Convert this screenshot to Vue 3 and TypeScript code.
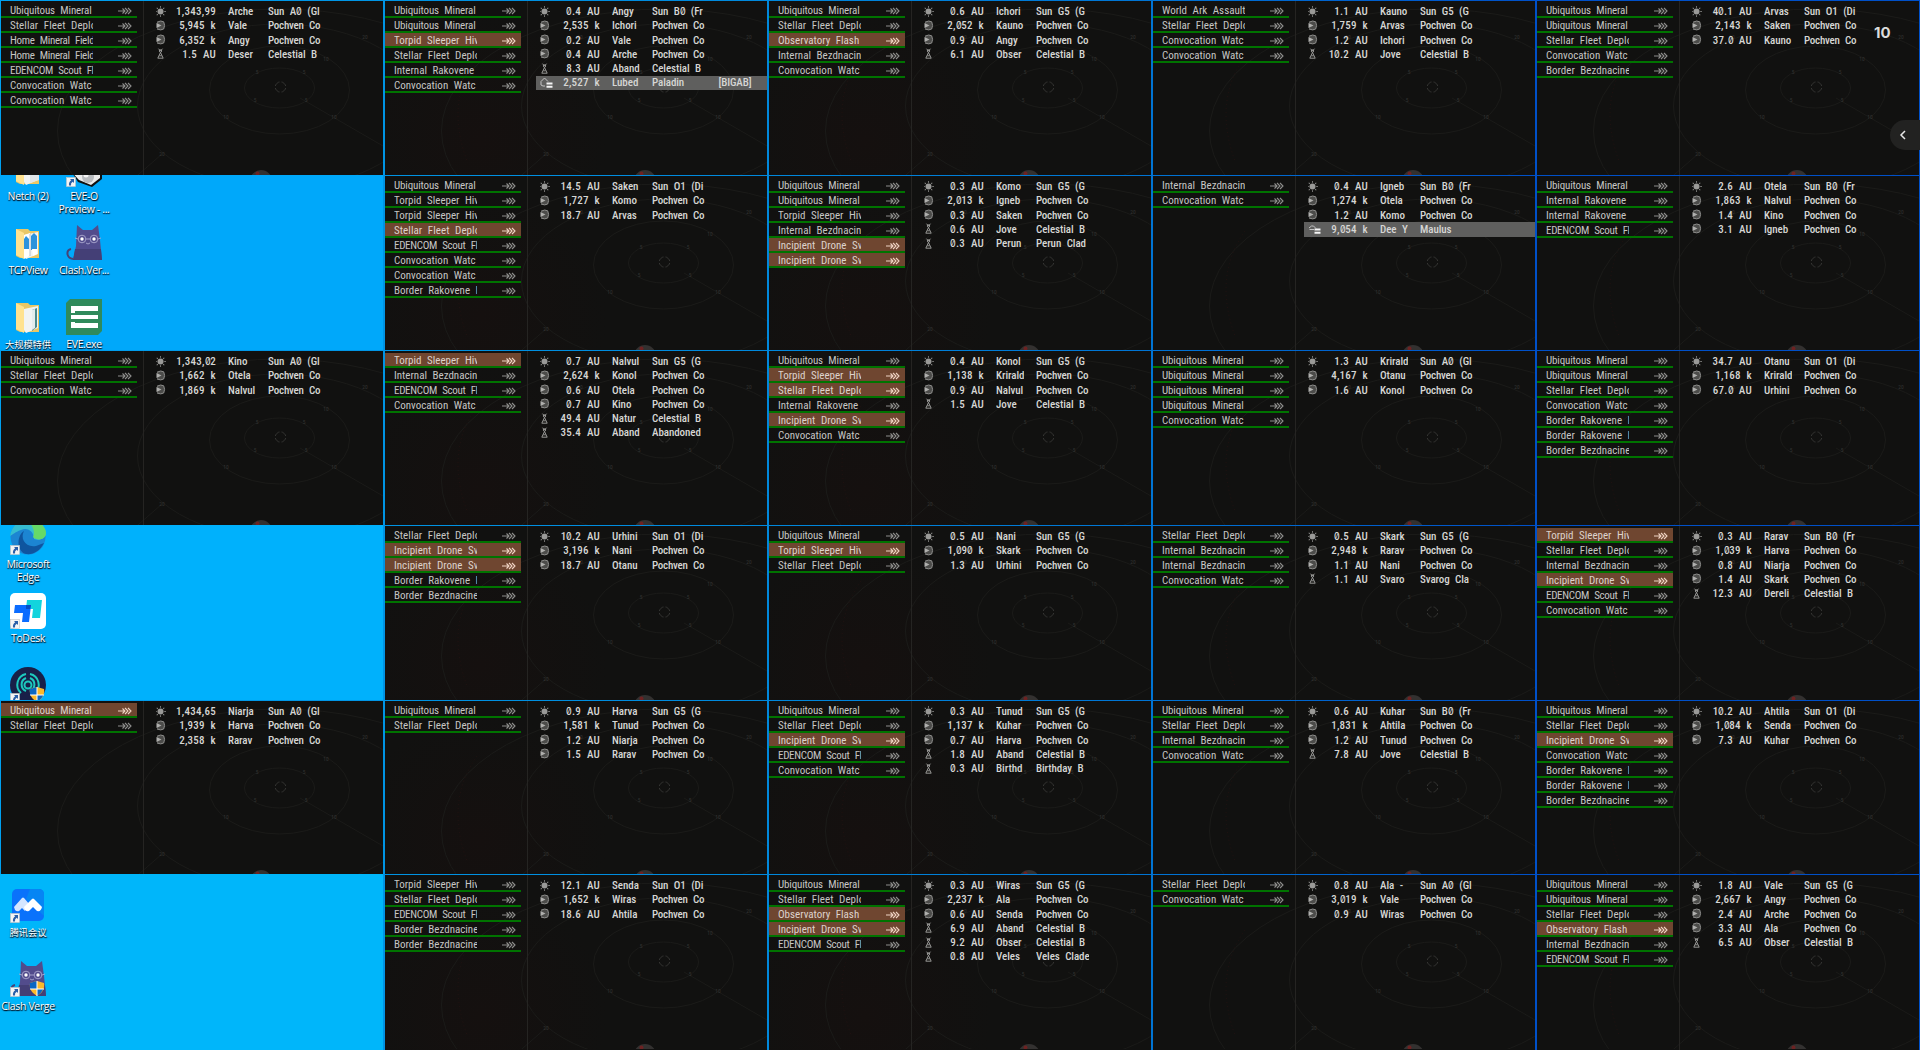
<script setup lang="ts">
interface Site { label: string; track: string; active: boolean }
interface Item { kind: string; dist: string; name: string; type: string; tag: string }
interface Shortcut { icon: string; label: string[]; link?: boolean; shield?: boolean }
interface Client { sites: Site[]; items: Item[]; desktop?: Shortcut[][]; offset: string }

const names: Record<string, string> = {
  U: 'Ubiquitous Mineral', S: 'Stellar Fleet Deplo', H: 'Home Mineral Field', E: 'EDENCOM Scout Fl',
  C: 'Convocation Watc', T: 'Torpid Sleeper Hiv', R: 'Internal Rakovene', Z: 'Internal Bezdnacin',
  O: 'Observatory Flash', W: 'World Ark Assault', D: 'Incipient Drone Sv', K: 'Border Rakovene I',
  B: 'Border Bezdnacine',
}
const types: Record<string, string> = { p: 'Pochven Co', c: 'Celestial B' }
const tracks: Record<string, string> = { U: 'snug', S: 'loose', H: 'tight', E: 'tight' }

// Lowercase site codes are the highlighted signatures.
function client(sites: string, items: string): Client {
  return {
    sites: [...sites].map((k) => {
      const key = k.toUpperCase()
      return { label: names[key], track: tracks[key] ?? '', active: k !== key }
    }),
    items: items.split(';').map((row) => {
      const [kind, dist, name, type, tag = ''] = row.split('|')
      return { kind, dist, name, type: types[type] ?? type, tag }
    }),
    offset: '',
  }
}
function desktop(offset: string, cols: Shortcut[][]): Client {
  return { sites: [], items: [], desktop: cols, offset }
}

const clients: Client[] = [
  client('USHHECC', 's|1,343,99|Arche|Sun A0 (Gl;g|5,945 k|Vale|p;g|6,352 k|Angy|p;b|1.5 AU|Deser|c'),
  client('UUtSRC', 's|0.4 AU|Angy|Sun B0 (Fr;g|2,535 k|Ichori|p;g|0.2 AU|Vale|p;g|0.4 AU|Arche|p;b|8.3 AU|Aband|c;f|2,527 k|Lubed|Paladin|[BIGAB]'),
  client('USoZC', 's|0.6 AU|Ichori|Sun G5 (G;g|2,052 k|Kauno|p;g|0.9 AU|Angy|p;b|6.1 AU|Obser|c'),
  client('WSCC', 's|1.1 AU|Kauno|Sun G5 (G;g|1,759 k|Arvas|p;g|1.2 AU|Ichori|p;b|10.2 AU|Jove|c'),
  client('UUSCB', 's|40.1 AU|Arvas|Sun O1 (Di;g|2,143 k|Saken|p;g|37.0 AU|Kauno|p'),

  desktop('up', [
    [{ icon: 'folder', label: ['Netch (2)'] }, { icon: 'folderBlue', label: ['TCPView'] }, { icon: 'folderDoc', label: ['大规模特供'] }],
    [{ icon: 'eveo', label: ['EVE-O', 'Preview - ...'], link: true }, { icon: 'cat', label: ['Clash.Ver...'] }, { icon: 'exe', label: ['EVE.exe'] }],
  ]),
  client('UTTsECCK', 's|14.5 AU|Saken|Sun O1 (Di;g|1,727 k|Komo|p;g|18.7 AU|Arvas|p'),
  client('UUTZdd', 's|0.3 AU|Komo|Sun G5 (G;g|2,013 k|Igneb|p;g|0.3 AU|Saken|p;b|0.6 AU|Jove|c;b|0.3 AU|Perun|Perun Clad'),
  client('ZC', 's|0.4 AU|Igneb|Sun B0 (Fr;g|1,274 k|Otela|p;g|1.2 AU|Komo|p;h|9,054 k|Dee Y|Maulus'),
  client('URRE', 's|2.6 AU|Otela|Sun B0 (Fr;g|1,863 k|Nalvul|p;g|1.4 AU|Kino|p;g|3.1 AU|Igneb|p'),

  client('USC', 's|1,343,02|Kino|Sun A0 (Gl;g|1,662 k|Otela|p;g|1,869 k|Nalvul|p'),
  client('tZEC', 's|0.7 AU|Nalvul|Sun G5 (G;g|2,624 k|Konol|p;g|0.6 AU|Otela|p;g|0.7 AU|Kino|p;b|49.4 AU|Natur|c;b|35.4 AU|Aband|Abandoned'),
  client('UtsRdC', 's|0.4 AU|Konol|Sun G5 (G;g|1,138 k|Krirald|p;g|0.9 AU|Nalvul|p;b|1.5 AU|Jove|c'),
  client('UUUUC', 's|1.3 AU|Krirald|Sun A0 (Gl;g|4,167 k|Otanu|p;g|1.6 AU|Konol|p'),
  client('UUSCKKB', 's|34.7 AU|Otanu|Sun O1 (Di;g|1,168 k|Krirald|p;g|67.0 AU|Urhini|p'),

  desktop('mid', [
    [{ icon: 'edge', label: ['Microsoft', 'Edge'], link: true }, { icon: 'todesk', label: ['ToDesk'], link: true }, { icon: 'ring', label: [], link: true, shield: true }],
  ]),
  client('SddKB', 's|10.2 AU|Urhini|Sun O1 (Di;g|3,196 k|Nani|p;g|18.7 AU|Otanu|p'),
  client('UtS', 's|0.5 AU|Nani|Sun G5 (G;g|1,090 k|Skark|p;g|1.3 AU|Urhini|p'),
  client('SZZC', 's|0.5 AU|Skark|Sun G5 (G;g|2,948 k|Rarav|p;g|1.1 AU|Nani|p;b|1.1 AU|Svaro|Svarog Cla'),
  client('tSZdEC', 's|0.3 AU|Rarav|Sun B0 (Fr;g|1,039 k|Harva|p;g|0.8 AU|Niarja|p;g|1.4 AU|Skark|p;b|12.3 AU|Dereli|c'),

  client('uS', 's|1,434,65|Niarja|Sun A0 (Gl;g|1,939 k|Harva|p;g|2,358 k|Rarav|p'),
  client('US', 's|0.9 AU|Harva|Sun G5 (G;g|1,581 k|Tunud|p;g|1.2 AU|Niarja|p;g|1.5 AU|Rarav|p'),
  client('USdEC', 's|0.3 AU|Tunud|Sun G5 (G;g|1,137 k|Kuhar|p;g|0.7 AU|Harva|p;b|1.8 AU|Aband|c;b|0.3 AU|Birthd|Birthday B'),
  client('USZC', 's|0.6 AU|Kuhar|Sun B0 (Fr;g|1,831 k|Ahtila|p;g|1.2 AU|Tunud|p;b|7.8 AU|Jove|c'),
  client('USdCKKB', 's|10.2 AU|Ahtila|Sun O1 (Di;g|1,084 k|Senda|p;g|7.3 AU|Kuhar|p'),

  desktop('low', [
    [{ icon: 'meeting', label: ['腾讯会议'], link: true }, { icon: 'cat', label: ['Clash Verge'], link: true, shield: true }],
  ]),
  client('TSEBB', 's|12.1 AU|Senda|Sun O1 (Di;g|1,652 k|Wiras|p;g|18.6 AU|Ahtila|p'),
  client('USodE', 's|0.3 AU|Wiras|Sun G5 (G;g|2,237 k|Ala|p;g|0.6 AU|Senda|p;b|6.9 AU|Aband|c;b|9.2 AU|Obser|c;b|0.8 AU|Veles|Veles Clade'),
  client('SC', 's|0.8 AU|Ala -|Sun A0 (Gl;g|3,019 k|Vale|p;g|0.9 AU|Wiras|p'),
  client('UUSoZE', 's|1.8 AU|Vale|Sun G5 (G;g|2,667 k|Angy|p;g|2.4 AU|Arche|p;g|3.3 AU|Ala|p;b|6.5 AU|Obser|c'),
]

const marks: [number, number, string][] = [
  [256, 73, '5'], [303, 73, '5'], [254, 101, '5'], [305, 101, '5'], [225, 118, '10'], [333, 118, '10'],
  [325, 60, '10'], [161, 155, '20'], [364, 38, '20'], [195, 38, '10'],
]

// Keeps zeros apart so they can take the slashed form.
const parts = (t: string): string[] => t.split(/(0)/).filter((p) => p !== '')
const isCjk = (t: string): boolean => /[\u4e00-\u9fff]/.test(t)
const rays = [0, 45, 90, 135, 180, 225, 270, 315]
</script>

<template>
  <main class="wall">
    <section v-for="(c, i) in clients" :key="i" class="cell" :class="{ desk: c.desktop, warm: i % 5 === 1 || i % 5 === 2 }">
      <div v-if="c.desktop" class="desktop" :class="c.offset">
        <div v-for="(col, j) in c.desktop" :key="j" class="col">
          <div v-for="(s, k) in col" :key="k" class="tile">
            <svg class="pic" viewBox="0 0 36 36">
              <template v-if="s.icon.startsWith('folder')">
                <path d="M6 4h12l2 2h9v27H10L6 31z" fill="#e9c766" />
                <path d="M6 4l8 4v26l-8-4z" fill="#ffe28f" />
                <path d="M14 10l14-3v22l-12 5-2-3z" fill="#f1f3f3" />
                <path v-if="s.icon === 'folder'" d="M20 18l9-3v14l-9 3z" fill="#dfe5e8" />
                <g v-if="s.icon === 'folderBlue'">
                  <path d="M14 10l6-2v22l-6 4z" fill="#fff" /><path d="M14 14l2-3 3 3v10h-5z" fill="#2c93dc" />
                  <path d="M21 11l3-3 3 3v14h-6z" fill="#2c93dc" /><path d="M15 24l5 0 0 6-4 3zM22 24l5 0v5l-4 2z" fill="#fff" /><path d="M20 9v22" stroke="#b8c4ce" />
                </g>
                <g v-if="s.icon === 'folderDoc'"><path d="M22 11l5-2v19l-5 4z" fill="#4c8a8d" /><path d="M22 11l3-1v19l-3 2z" fill="#e4ecec" /></g>
              </template>
              <g v-else-if="s.icon === 'cat'">
                <path d="M7 34C0 33 0 25 5 24" fill="none" stroke="#454277" stroke-width="2" />
                <path d="M11 0l6 5h9l6-5 2 15 2 20H7l3-14z" fill="#524c8c" />
                <path d="M9 24h26l1 11H7z" fill="#443f76" />
                <g fill="none" stroke="#aaa7cf" stroke-width=".9"><circle cx="16" cy="14" r="3.8" /><circle cx="28" cy="14" r="3.8" /><path d="M20 14h4M9 13l3 1M32 14l3-1M20 18l2 1 2-1" /></g>
                <circle cx="16" cy="14" r="1.7" fill="#fff" /><circle cx="28" cy="14" r="1.7" fill="#fff" />
              </g>
              <g v-else-if="s.icon === 'exe'">
                <path d="M4 0h32v32l-4 4H0V4z" fill="#2f8a5b" />
                <path d="M5 7h27v5H9v2H5zM5 16h27v4H5zM5 23h4v1h23v5H5z" fill="#fff" />
              </g>
              <g v-else-if="s.icon === 'eveo'">
                <path d="M0 14h36v14l-10 8-14-5-3-5z" fill="#111" /><path d="M1 16h33v11l-9 7-12-5z" fill="#ececec" />
                <circle cx="22" cy="26" r="6" fill="#b9bcbf" /><circle cx="20" cy="24" r="2.5" fill="#f6f6f6" />
              </g>
              <g v-else-if="s.icon === 'edge'">
                <circle cx="18" cy="18" r="17.5" fill="#1c85d2" />
                <path d="M0 17C2 6 10 0 18 0c11 0 18 8 18 14 0 6-7 8-12 6 0-7-6-12-13-9C5 13 2 16 0 17z" fill="#36bcd0" />
                <path d="M18 0c11 0 18 8 18 14 0 6-7 8-12 5-2-1 0-2 0-5 0-5-5-12-6-14z" fill="#66d968" />
                <path d="M14 12c-4 7 1 17 12 15l8-3c-4 8-11 12-18 11C7 33 6 17 14 12z" fill="#0f559f" />
              </g>
              <g v-else-if="s.icon === 'todesk'">
                <rect width="36" height="36" rx="5" fill="#fff" />
                <path d="M17 7h15l-2 18h-8l1-9h-7z" fill="#12d4dd" />
                <path d="M5 12h16l-2 17h-7l1-9H4z" fill="#0a6cff" /><path d="M16 12h5l-1 4h-4z" fill="#064fc4" />
              </g>
              <g v-else-if="s.icon === 'ring'">
                <circle cx="18" cy="18" r="18" fill="#182048" />
                <g fill="none" stroke="#1dc9bd" stroke-width="2"><path d="M16 7a11 11 0 0 0-5 19M20 7a11 11 0 0 1 5 19" /><path d="M16 11a7 7 0 0 0 0 13M20 11a7 7 0 0 1 0 13" /><circle cx="18" cy="18" r="3.5" /></g>
              </g>
              <g v-else>
                <rect x="2" y="2" width="32" height="32" rx="5" fill="#0a72fb" /><path d="M20 2h9a5 5 0 0 1 5 5v22L16 12z" fill="#0685f4" />
                <path d="M4 20l8-9q1-1 2 0l6 7-5 6-3-3-3 3q-2 1-4-1z" fill="#d5e6ff" />
                <path d="M14 20l8-8q1-1 2 0l8 8q-1 5-5 4l-4-4-4 4q-4 1-5-4z" fill="#fff" />
              </g>
              <g v-if="s.shield">
                <path d="M27 20l7 2c1 6-2 10-7 13-5-3-8-7-7-13z" fill="#fbb92b" />
                <path d="M27 20v8h-7l-.2-6zM27 28h6.500q-2 4-6.500 7z" fill="#0a66c2" /><path d="M27 20v15M20 28h14" stroke="#fff" />
              </g>
              <g v-if="s.link">
                <rect x=".5" y="26.500" width="9" height="9" fill="#f4f4f4" stroke="#c4c4c4" stroke-width=".6" />
                <path d="M4 28h4v4l-1.300-1.300Q4.500 32 5 34.500H3Q2.500 31 5.200 29.300z" fill="#2a5fa8" />
              </g>
            </svg>
            <span v-for="l in s.label" :key="l" class="cap" :class="{ cjk: isCjk(l) }">{{ l }}</span>
          </div>
        </div>
      </div>

      <template v-else>
        <svg class="space" viewBox="0 0 382 174">
          <g fill="none" stroke="#1b1b19">
            <ellipse cx="278.500" cy="87" rx="35" ry="20" /><ellipse cx="278.500" cy="89" rx="70" ry="44" />
            <ellipse cx="278.500" cy="105" rx="142" ry="82" /><ellipse cx="278.500" cy="130" rx="222" ry="122" />
            <path d="M299 97L382 145M161 153L130 180" />
            <path v-if="i % 5" class="dots" d="M92 55Q60 100 82 160" />
          </g>
          <path d="M274.500 85v-1l3-3h1m2 0h1l3 3v1m0 2v1l-3 3h-1m-2 0h-1l-3-3v-1" fill="none" stroke="#343432" />
          <text v-for="(m, k) in marks" :key="k" :x="m[0]" :y="m[1]" class="mark">{{ m[2] }}</text>
          <circle cx="260" cy="180" r="11" fill="#333130" /><circle cx="256.500" cy="172.500" r="2" fill="#6d2222" />
        </svg>
        <div class="sites">
          <div v-for="(s, k) in c.sites" :key="k" class="site" :class="{ active: s.active }">
            <span class="label" :class="s.track">{{ s.label }}</span>
            <svg class="warp" viewBox="0 0 14 8"><path d="M0 4h7M4.500 1.500L7 4 4.500 6.500M7 1l3 3-3 3M10 1l3 3-3 3" /></svg>
          </div>
        </div>
        <div class="items">
          <div v-for="(o, k) in c.items" :key="k" class="item" :class="{ ship: o.kind === 'f' || o.kind === 'h' }">
            <svg class="ico" viewBox="0 0 14 12">
              <g v-if="o.kind === 's'"><circle cx="4.500" cy="5.500" r="3" fill="#9a9a98" /><path v-for="r in rays" :key="r" d="M4.500 .2v1.500" stroke="#8c8c8a" :transform="`rotate(${r} 4.5 5.5)`" /></g>
              <g v-else-if="o.kind === 'g'"><path d="M1 2.200Q5 0 7.700 1.800 9.500 5.500 7.700 9 5 10.800 1 9" fill="#4c4c4a" stroke="#8e8e8c" /><path d="M.5 3l5 2.500-5 2.500z" fill="#b0b0ae" /></g>
              <g v-else-if="o.kind === 'b'" fill="none" stroke="#a5a5a3" stroke-width=".9"><circle cx="4.500" cy="3" r="1.200" /><path d="M2.500 .7L4.500 3 6.500 .7M4.500 4.500L1.800 10.200h5.400zM3.300 7.800h2.400" /></g>
              <g v-else>
                <path v-if="o.kind === 'f'" d="M1 8V4.500L4.500 1 8 4.500M1 8l2 1h2" fill="none" stroke="#c4c4c4" /><path v-else d="M1 5l2.500-2h2L8 5.500M1.500 6.500H6" fill="none" stroke="#c4c4c4" />
                <path d="M6.500 5.500h6v2h-6zM6.500 8.800h6v2h-6z" fill="#f4f4f4" />
              </g>
            </svg>
            <span class="dist"><span v-for="(p, n) in parts(o.dist)" :key="n" :class="{ zero: p === '0' }">{{ p }}</span></span>
            <span class="name">{{ o.name }}</span>
            <span class="type" :class="{ snug: o.type === 'Pochven Co' }"><span v-for="(p, n) in parts(o.type)" :key="n" :class="{ zero: p === '0' }">{{ p }}</span></span>
            <span class="tag">{{ o.tag }}</span>
          </div>
        </div>
      </template>
    </section>
    <div class="count">10</div>
    <div class="drawer"><svg viewBox="0 0 8 12"><path d="M6 2L2 6l4 4" /></svg></div>
  </main>
</template>

<style scoped>
.wall {
  position: relative;
  width: 1920px;
  height: 1050px;
  overflow: hidden;
  display: grid;
  grid-template-columns: repeat(5, 384px);
  grid-template-rows: 175px 175px 175px 175px 174px 176px;
  background: linear-gradient(to right, #00a0f0 0, #0094e4 384px, #0088dc 768px, #0074d4 1152px, #0050c8 1536px, #0050c8 100%);
}
.cell {
  position: relative;
  box-sizing: border-box;
  margin: 1px 1px 0;
  overflow: hidden;
  display: flex;
  background: #111110;
  font-family: Roboto, "Liberation Sans", sans-serif;
  font-stretch: 75%;
  font-size: 11px;
  color: #d6d6d4;
}
.cell.warm { background: radial-gradient(circle at 25% 80%, #15100f, #111110 40%); }
.cell.desk { margin-left: 0; margin-top: 0; background: #00a8fa; }
.cell:nth-child(16) { background: #00b1fc; }
.cell:nth-child(26) { background: #00b6fa; }
.space { position: absolute; left: 0; top: 0; width: 382px; height: 174px; }
.dots { stroke: #231312; stroke-dasharray: 1 3; }
.mark { font-size: 5.5px; fill: #343432; text-anchor: middle; }
.sites {
  position: relative;
  box-sizing: border-box;
  width: 143px;
  padding-top: 2px;
  border-right: 1px solid #252422;
}
.site {
  box-sizing: border-box;
  width: 136px;
  height: 15px;
  display: flex;
  align-items: center;
  padding-left: 9px;
  border-bottom: 2px solid #007300;
  color: #c6c6c4;
  word-spacing: 3px;
}
.site.active { background: #6f4630; color: #ddd2cc; }
.label { width: 83px; height: 15px; line-height: 15px; overflow: hidden; white-space: pre; margin-top: 2px; }
.snug { letter-spacing: -.15px; }
.loose { letter-spacing: .06px; }
.tight { letter-spacing: -.32px; }
.warp { width: 14px; height: 8px; margin-left: 25px; margin-top: 2px; fill: none; stroke: #8e8e8c; stroke-width: 1.1; }
.active .warp { stroke: #f0d4c4; }
.items { position: relative; flex: 1; padding: 3.500px 0 0 8px; }
.item {
  display: flex;
  align-items: center;
  height: 14.25px;
  font-weight: 500;
  white-space: pre;
  word-spacing: 3px;
}
.ship { background: #5f5f5e; }
.ico { width: 14px; height: 12px; margin-left: 4px; }
.dist { width: 46px; text-align: right; letter-spacing: .25px; }
.name { width: 28px; margin-left: 12px; overflow: hidden; letter-spacing: -.05px; }
.type { width: 52.500px; margin-left: 12px; overflow: hidden; letter-spacing: -.08px; }
.type.snug { letter-spacing: -.25px; }
.tag { margin-left: 14px; letter-spacing: -.1px; }
.zero {
  display: inline-block;
  width: 5.6px;
  font-family: Inter, sans-serif;
  font-size: 10.500px;
  font-feature-settings: "zero";
  letter-spacing: 0;
  transform: scaleX(.84);
  transform-origin: left;
}
.desktop { display: flex; }
.up { margin-top: -24px; }
.mid { margin-top: -6px; }
.low { margin-top: 13px; }
.col { width: 56px; }
.tile { width: 56px; height: 74px; display: flex; flex-direction: column; align-items: center; }
.pic { width: 36px; height: 36px; margin-bottom: 3px; flex: none; overflow: visible; }
.cap {
  line-height: 13px;
  font-family: "Open Sans", "Noto Sans CJK SC", sans-serif;
  font-stretch: 100%;
  font-size: 10.500px;
  letter-spacing: -.35px;
  color: #fff;
  white-space: nowrap;
  text-shadow: 0 1px 1px #012, 1px 1px 1px rgba(0, 10, 30, .8);
}
.cap.cjk { font-size: 9.200px; letter-spacing: 0; }
.count {
  position: absolute;
  left: 1874px;
  top: 24px;
  font: 700 15px/18px Inter, sans-serif;
  color: #dcdcdc;
}
.drawer {
  position: absolute;
  right: 0;
  top: 120px;
  width: 30px;
  height: 30px;
  display: flex;
  align-items: center;
  padding-left: 9px;
  box-sizing: border-box;
  border-radius: 15px 0 0 15px;
  background: #222221;
}
.drawer svg { width: 8px; height: 12px; fill: none; stroke: #e8e8e8; stroke-width: 1.500; }
</style>
